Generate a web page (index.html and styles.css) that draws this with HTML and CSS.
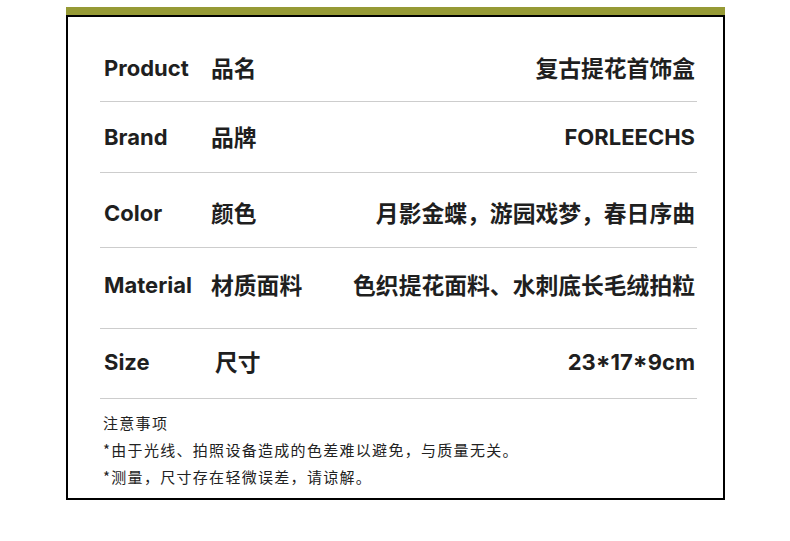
FILE: index.html
```html
<!DOCTYPE html>
<html lang="zh">
<head>
<meta charset="utf-8">
<title>商品信息</title>
<link rel="stylesheet" href="styles.css">
</head>
<body>
<div class="card">
  <div class="frame">
    <div class="spec">
      <div class="row row-1">
        <span class="en label-en">Product</span>
        <span class="zh label-zh">品名</span>
        <span class="zh value">复古提花首饰盒</span>
      </div>
      <div class="row row-2">
        <span class="en label-en">Brand</span>
        <span class="zh label-zh">品牌</span>
        <span class="en value">FORLEECHS</span>
      </div>
      <div class="row row-3">
        <span class="en label-en">Color</span>
        <span class="zh label-zh">颜色</span>
        <span class="zh value">月影金蝶，游园戏梦，春日序曲</span>
      </div>
      <div class="row row-4">
        <span class="en label-en">Material</span>
        <span class="zh label-zh">材质面料</span>
        <span class="zh value">色织提花面料、水刺底长毛绒拍粒</span>
      </div>
      <div class="row row-5">
        <span class="en label-en">Size</span>
        <span class="zh label-zh label-size">尺寸</span>
        <span class="en value">23*17*9cm</span>
      </div>
      <div class="notes">
        <p>注意事项</p>
        <p>*由于光线、拍照设备造成的色差难以避免，与质量无关。</p>
        <p>*测量，尺寸存在轻微误差，请谅解。</p>
      </div>
    </div>
  </div>
</div>
</body>
</html>
```

FILE: styles.css
```css
html, body {
  margin: 0;
  padding: 0;
  background: #ffffff;
}

body {
  padding: 7px 0 0 66px;
  font-family: "Inter", "Noto Sans CJK SC", sans-serif;
  color: #1f1f1f;
}

.card {
  width: 659px;
  padding-top: 8px;
  background: #969a35;
}

.frame {
  border: 2px solid #000000;
  background: #ffffff;
}

.spec {
  margin: 0 26px 0 32px;
}

.row {
  display: flex;
  align-items: center;
  line-height: 30px;
  height: 30px;
  padding-left: 4px;
  padding-right: 2px;
  border-bottom: 1px solid #cdcdcd;
  white-space: nowrap;
}

.row-1 { padding-top: 36px; padding-bottom: 18px; }
.row-2 { padding-top: 20px; padding-bottom: 20px; }
.row-3 { padding-top: 25px; padding-bottom: 19px; }
.row-4 { padding-top: 22px; padding-bottom: 28px; }
.row-5 { padding-top: 18px; padding-bottom: 21px; }

.en {
  font-family: "Inter", sans-serif;
  font-size: 22px;
  font-weight: 700;
  letter-spacing: 0;
}

.zh {
  font-family: "Noto Sans CJK SC", sans-serif;
  font-size: 22.8px;
  font-weight: 700;
}

.label-en {
  width: 107px;
  flex: none;
}

.label-size {
  margin-left: 4px;
}

.value {
  margin-left: auto;
}

.notes {
  padding: 10px 0 8px 3px;
  font-family: "Noto Sans CJK SC", sans-serif;
  font-size: 15px;
  letter-spacing: 1.3px;
  line-height: 27px;
  color: #222222;
}

.notes p {
  margin: 0;
  white-space: nowrap;
}
```
